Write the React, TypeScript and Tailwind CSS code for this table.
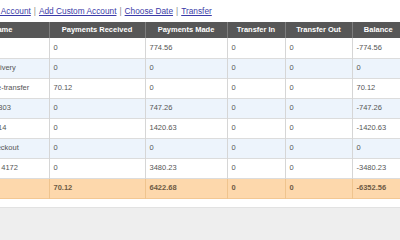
import React from "react";

const rows = [
  { name: "Cash", rec: "0", made: "774.56", tin: "0", tout: "0", bal: "-774.56" },
  { name: "Grocery Delivery", rec: "0", made: "0", tin: "0", tout: "0", bal: "0" },
  { name: "My Interac e-transfer", rec: "70.12", made: "0", tin: "0", tout: "0", bal: "70.12" },
  { name: "Invoice #10303", rec: "0", made: "747.26", tin: "0", tout: "0", bal: "-747.26" },
  { name: "Transfer 9914", rec: "0", made: "1420.63", tin: "0", tout: "0", bal: "-1420.63" },
  { name: "Shopify Checkout", rec: "0", made: "0", tin: "0", tout: "0", bal: "0" },
  { name: "Acct ending 4172", rec: "0", made: "3480.23", tin: "0", tout: "0", bal: "-3480.23" },
];

const headers = ["Name", "Payments Received", "Payments Made", "Transfer In", "Transfer Out", "Balance"];

const App = () => {
  return (
    <div
      className="w-[400px] h-[240px] flex flex-col overflow-hidden bg-white"
      style={{ fontFamily: '"Liberation Sans", Arial, sans-serif' }}
    >
      <div className="bg-white pb-[8px]">
        <div className="-ml-[44px] w-[448px]">
          {/* top links */}
          <div className="h-[22px] flex items-center pl-[7px] text-[8.3px] text-[#888] gap-[3px]">
            <a className="text-[#3b3ba8] underline">Add Bank Account</a>
            <span>|</span>
            <a className="text-[#3b3ba8] underline">Add Custom Account</a>
            <span>|</span>
            <a className="text-[#3b3ba8] underline">Choose Date</a>
            <span>|</span>
            <a className="text-[#3b3ba8] underline">Transfer</a>
          </div>

          <table className="table-fixed border-collapse w-[448px] text-[7.5px]">
            <colgroup>
              <col className="w-[93px]" />
              <col className="w-[96px]" />
              <col className="w-[82px]" />
              <col className="w-[58px]" />
              <col className="w-[67px]" />
              <col className="w-[52px]" />
            </colgroup>
            <thead>
              <tr className="h-[16px] bg-[#575757] text-white">
                {headers.map((h, i) => (
                  <th
                    key={i}
                    className="font-bold text-center border-l border-[#7d7d7d] first:border-l-0 px-[4px]"
                  >
                    {h}
                  </th>
                ))}
              </tr>
            </thead>
            <tbody className="text-[#555]">
              {rows.map((r, i) => (
                <tr
                  key={i}
                  className={`h-[20px] border-b border-[#dcdcdc] ${i % 2 === 1 ? "bg-[#edf4fc]" : "bg-white"}`}
                >
                  {[r.name, r.rec, r.made, r.tin, r.tout, r.bal].map((v, j) => (
                    <td
                      key={j}
                      className="px-[4px] border-l border-[#d6d6d6] first:border-l-0 whitespace-nowrap overflow-hidden"
                    >
                      {v}
                    </td>
                  ))}
                </tr>
              ))}
              <tr className="h-[20px] bg-[#fdd8ac] text-[#6e5b44] font-bold border-b border-[#f3c894]">
                {["", "70.12", "6422.68", "0", "0", "-6352.56"].map((v, j) => (
                  <td key={j} className="px-[4px] border-l border-[#efc48e] first:border-l-0">
                    {v}
                  </td>
                ))}
              </tr>
            </tbody>
          </table>
        </div>
      </div>
      <div className="flex-1 bg-[#eeeeee] border-t border-[#e2e2e2]" />
    </div>
  );
};

export default App;
